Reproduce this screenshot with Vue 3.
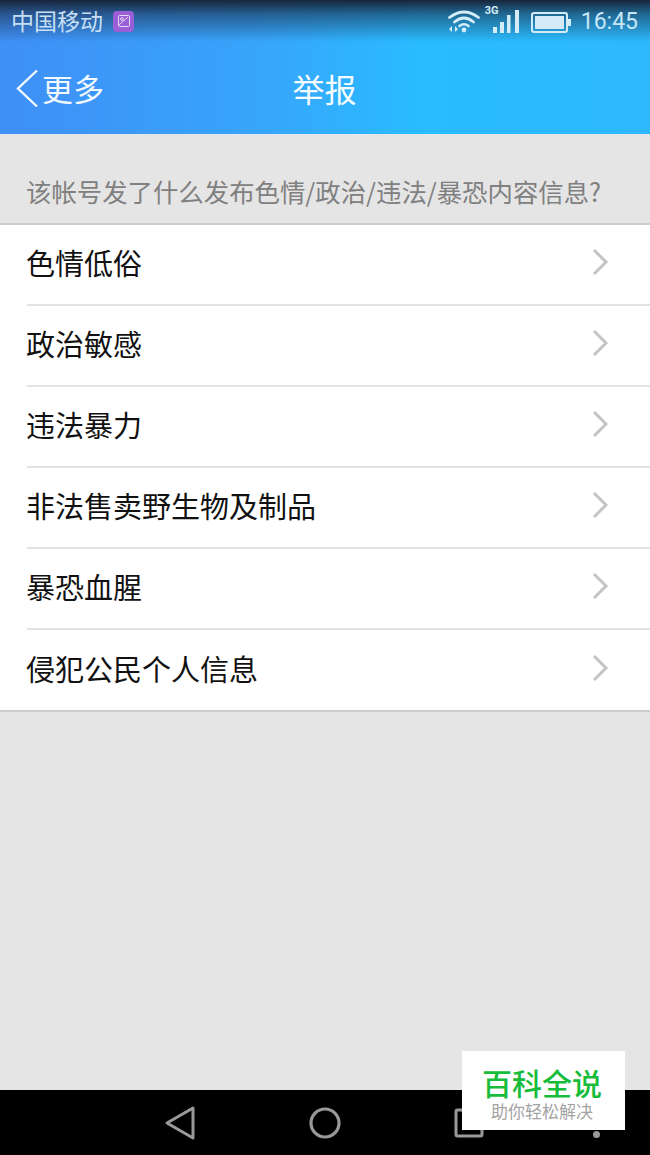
<script setup>
const reasons = [
  '色情低俗',
  '政治敏感',
  '违法暴力',
  '非法售卖野生物及制品',
  '暴恐血腥',
  '侵犯公民个人信息'
]
</script>

<template>
  <div class="phone">
    <header class="header">
      <div class="statusbar">
        <div class="status-left">
          <span class="carrier">中国移动</span>
          <span class="notif">
            <svg width="14" height="14" viewBox="0 0 14 14" fill="none" stroke="#e6d8f5" stroke-width="1">
              <rect x="1.5" y="1.5" width="11" height="11" rx="1" />
              <path d="M2 11 L11 3" />
              <circle cx="5" cy="5" r="1.4" />
            </svg>
          </span>
        </div>
        <div class="status-right">
          <svg class="wifi" width="34" height="24" viewBox="0 0 34 24" fill="none" stroke="#d4ecf8" stroke-linecap="round">
            <path d="M2.5 8.5 Q17 -2.5 31.5 8.5" stroke-width="2.8" />
            <path d="M7.5 13 Q17 5 26.5 13" stroke-width="2.8" />
            <path d="M12.5 17 Q17 13.5 21.5 17" stroke-width="2.6" />
            <circle cx="17" cy="21" r="2.4" fill="#d4ecf8" stroke="none" />
            <path d="M5 17 L2 20 L5 23 Z M8 17 L11 20 L8 23 Z" fill="#d4ecf8" stroke="none" />
          </svg>
          <div class="signal">
            <span class="net">3G</span>
            <svg width="28" height="24" viewBox="0 0 28 24" fill="#d4ecf8">
              <rect x="1" y="18" width="4" height="6" />
              <rect x="8" y="13" width="4" height="11" />
              <rect x="15" y="6" width="3.5" height="18" />
              <rect x="23" y="1" width="4" height="23" />
            </svg>
          </div>
          <svg class="battery" width="41" height="21" viewBox="0 0 41 21">
            <rect x="1" y="1" width="35" height="19" rx="2" fill="none" stroke="#d4ecf8" stroke-width="2" />
            <rect x="4" y="4" width="29" height="13" fill="#d4ecf8" />
            <rect x="37" y="7" width="3" height="7" fill="#d4ecf8" />
          </svg>
          <span class="clock">16:45</span>
        </div>
      </div>
      <div class="navbar">
        <div class="back">
          <svg width="26" height="40" viewBox="0 0 26 40" fill="none" stroke="#f2f8ff" stroke-width="2.4">
            <path d="M21 1.5 L2 19.5 L21 37.5" />
          </svg>
          <span class="back-text">更多</span>
        </div>
        <h1 class="title">举报</h1>
      </div>
    </header>

    <main class="content">
      <p class="notice">该帐号发了什么发布色情/政治/违法/暴恐内容信息?</p>
      <ul class="list">
        <li v-for="item in reasons" :key="item" class="row">
          <div class="row-inner">
            <span class="label">{{ item }}</span>
            <svg class="chevron" width="18" height="28" viewBox="0 0 18 28" fill="none" stroke="#c4c4c4" stroke-width="3">
              <path d="M3 2 L15 14 L3 26" />
            </svg>
          </div>
        </li>
      </ul>
    </main>

    <footer class="softkeys">
      <svg width="32" height="36" viewBox="0 0 32 36" fill="none" stroke="#999" stroke-width="3" stroke-linejoin="round">
        <path d="M29 3 L3 18 L29 33 Z" />
      </svg>
      <svg width="32" height="32" viewBox="0 0 32 32" fill="none" stroke="#999" stroke-width="3.2">
        <circle cx="16" cy="16" r="14" />
      </svg>
      <svg width="30" height="30" viewBox="0 0 30 30" fill="none" stroke="#999" stroke-width="3">
        <rect x="2" y="2" width="26" height="26" rx="1.5" />
      </svg>
      <span class="dots"></span>
    </footer>

    <div class="watermark">
      <div class="wm-title">百科全说</div>
      <div class="wm-sub">助你轻松解决</div>
    </div>
  </div>
</template>

<style scoped>
.phone {
  position: relative;
  width: 650px;
  height: 1155px;
  display: flex;
  flex-direction: column;
  overflow: hidden;
  background: #e5e5e5;
  font-family: "Noto Sans CJK SC", "Liberation Sans", sans-serif;
}
.header {
  height: 134px;
  flex: none;
  background:
    linear-gradient(to bottom, #17263c 0, rgba(23, 38, 60, 0.55) 14px, rgba(23, 38, 60, 0) 42px),
    linear-gradient(to right, #3f8ff5 0%, #37a5fc 40%, #29bcff 65%, #2db8fc 100%);
}
.statusbar {
  height: 44px;
  box-sizing: border-box;
  padding: 0 12px 0 11px;
  display: flex;
  align-items: center;
  justify-content: space-between;
}
.status-left,
.status-right {
  display: flex;
  align-items: center;
}
.carrier {
  font-size: 23px;
  line-height: 40px;
  padding-bottom: 4px;
  color: #c6dff5;
}
.notif {
  width: 21px;
  height: 21px;
  margin-left: 10px;
  margin-bottom: 2px;
  border-radius: 4px;
  background: #9a5fd6;
  display: flex;
  align-items: center;
  justify-content: center;
}
.wifi {
  margin-right: 11px;
  margin-bottom: 2px;
}
.signal {
  position: relative;
  width: 28px;
  height: 24px;
  margin-right: 11px;
  margin-bottom: 2px;
}
.net {
  position: absolute;
  left: -7px;
  top: -4px;
  font-family: "Roboto", sans-serif;
  font-size: 11px;
  font-weight: 700;
  line-height: 12px;
  color: #d4ecf8;
}
.signal svg {
  display: block;
}
.battery {
  margin-right: 9px;
}
.clock {
  font-family: "Roboto", sans-serif;
  font-size: 23px;
  line-height: 44px;
  color: #c6e6f8;
}
.navbar {
  position: relative;
  height: 90px;
  display: flex;
  align-items: center;
  justify-content: center;
}
.back {
  position: absolute;
  left: 16px;
  top: 25px;
  display: flex;
  align-items: center;
  color: #f2f8ff;
  font-size: 31px;
  line-height: 38px;
}
.back svg {
  display: block;
}
.back-text {
  padding-bottom: 2px;
}
.title {
  margin: 0;
  padding: 0 1px 2px 0;
  font-size: 32px;
  font-weight: 400;
  line-height: 88px;
  color: #f5fbff;
}
.content {
  flex: 1;
}
.notice {
  margin: 0;
  height: 89px;
  box-sizing: border-box;
  padding: 40px 0 0 26px;
  font-size: 25.4px;
  line-height: 35px;
  color: #808080;
  white-space: nowrap;
}
.list {
  margin: 0;
  padding: 0;
  list-style: none;
  background: #fff;
  border-top: 2px solid #cdcdcd;
  border-bottom: 2px solid #cdcdcd;
}
.row {
  padding-left: 27px;
}
.row-inner {
  height: 81px;
  box-sizing: border-box;
  display: flex;
  align-items: center;
  justify-content: space-between;
  padding-right: 41px;
  padding-bottom: 5px;
  border-bottom: 2px solid #e3e3e3;
}
.row:last-child .row-inner {
  height: 80px;
  border-bottom: 0;
  padding-bottom: 4px;
}
.label {
  margin-left: -1px;
  padding-bottom: 1px;
  font-size: 29px;
  line-height: 40px;
  color: #111;
}
.chevron {
  display: block;
}
.softkeys {
  position: relative;
  height: 65px;
  flex: none;
  background: #000;
  display: flex;
  align-items: center;
  padding-left: 164px;
  gap: 113px;
}
.softkeys svg {
  display: block;
}
.dots {
  position: absolute;
  left: 593px;
  top: 41px;
  width: 7px;
  height: 7px;
  border-radius: 50%;
  background: #999;
}
.watermark {
  position: absolute;
  left: 462px;
  top: 1051px;
  width: 163px;
  height: 79px;
  padding-right: 3px;
  box-sizing: border-box;
  background: #fff;
  text-align: center;
}
.wm-title {
  margin-top: 14px;
  font-size: 30px;
  font-weight: 500;
  line-height: 34px;
  color: #17bd3a;
}
.wm-sub {
  margin-top: 2px;
  font-size: 17px;
  line-height: 20px;
  color: #a3a3a3;
}
</style>
